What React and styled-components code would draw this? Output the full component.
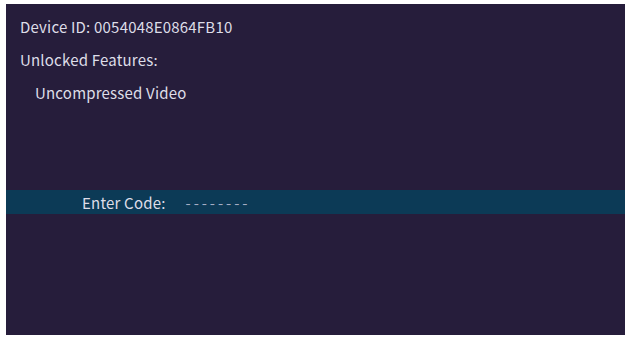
import React from "react";
import styled, { createGlobalStyle } from "styled-components";

const Global = createGlobalStyle`
  html, body { margin: 0; padding: 0; background: #ffffff; }
  #root { width: 629px; height: 337px; }
`;

const Screen = styled.div`
  box-sizing: border-box;
  margin: 4px 4px 0 6px;
  width: 619px;
  height: 331px;
  background: #261d3b;
  padding-top: 6px;
  display: flex;
  flex-direction: column;
  font-family: "Noto Sans CJK JP", "DejaVu Sans", sans-serif;
  font-size: 15px;
  letter-spacing: 0.2px;
  color: #dedde8;
`;

const Line = styled.div`
  height: 33px;
  line-height: 33px;
  padding-left: ${(p) => p.$indent}px;
  white-space: nowrap;
`;

const Spacer = styled.div`
  height: 81px;
`;

const Band = styled.div`
  height: 24px;
  background: #0c3a56;
  display: flex;
  align-items: center;
  padding-left: 76px;
  gap: 20px;
  white-space: nowrap;
`;

const Dashes = styled.span`
  color: #a4adc4;
  letter-spacing: 2.9px;
`;

export default function App() {
  return (
    <>
      <Global />
      <Screen>
        <Line $indent={14}>Device ID: 0054048E0864FB10</Line>
        <Line $indent={14}>Unlocked Features:</Line>
        <Line $indent={29}>Uncompressed Video</Line>
        <Spacer />
        <Band>
          <span>Enter Code:</span>
          <Dashes>--------</Dashes>
        </Band>
      </Screen>
    </>
  );
}
